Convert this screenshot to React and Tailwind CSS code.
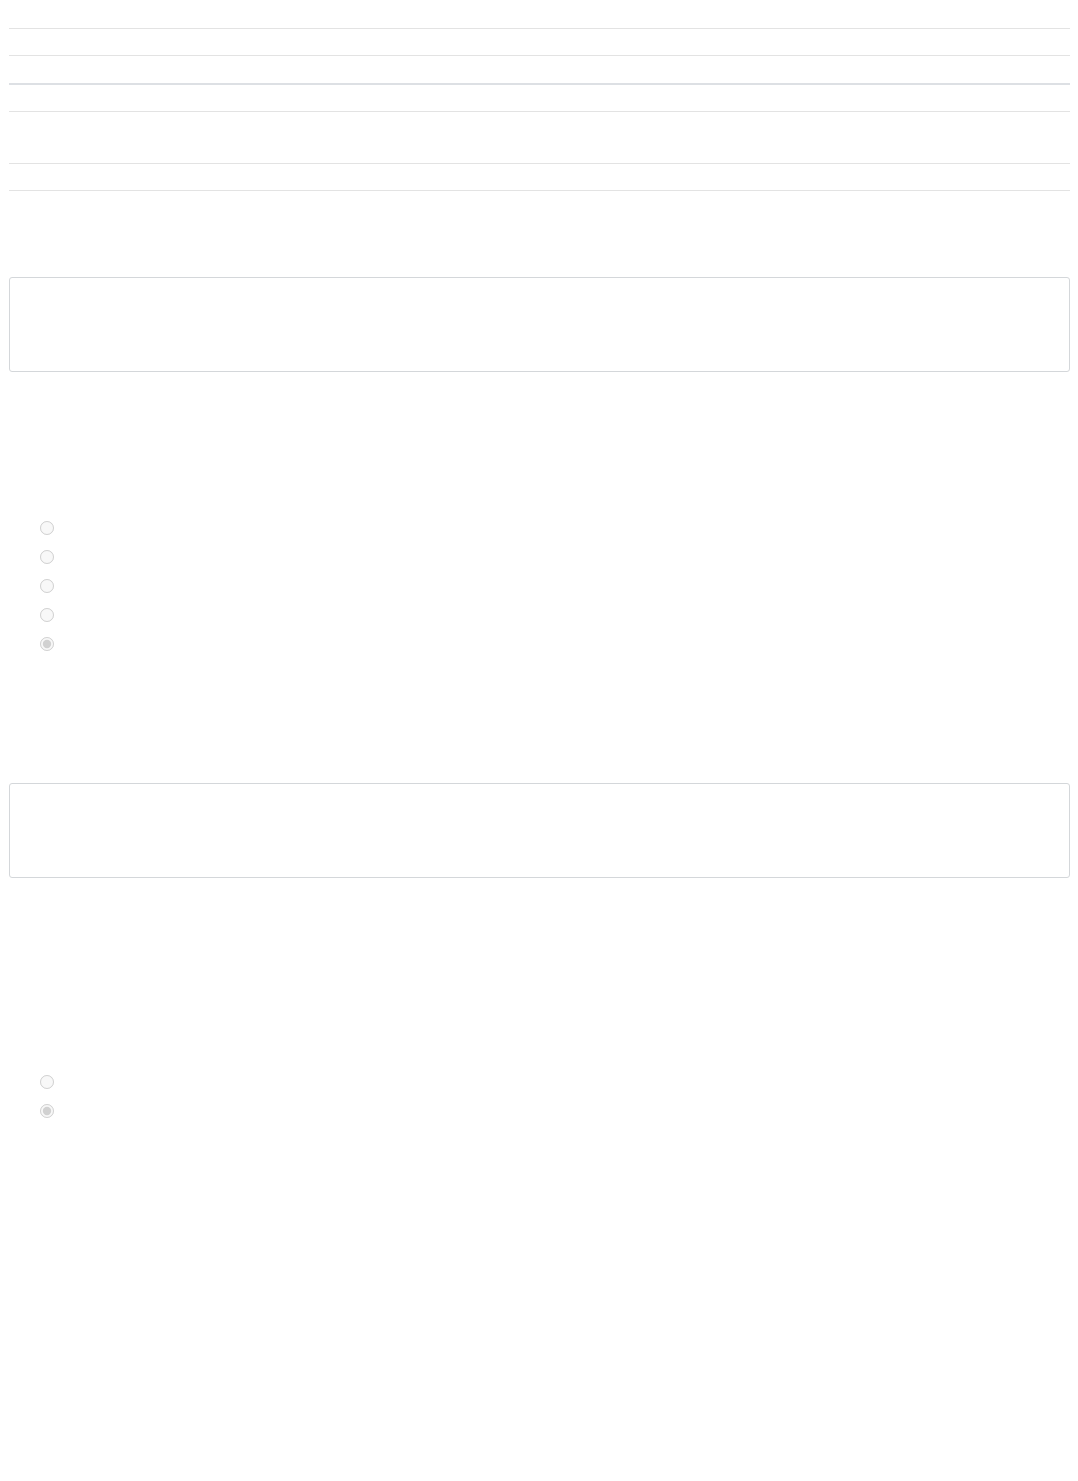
import React from "react";

function Radio({ checked }) {
  return (
    <div className="h-[29px] flex items-center">
      <input
        type="radio"
        disabled
        defaultChecked={checked}
        className="m-0 ml-[40px] w-[14px] h-[14px]"
        readOnly
      />
    </div>
  );
}

export default function App() {
  return (
    <div className="bg-white min-h-[1481px] pl-[9px] pr-[8px] font-['Liberation_Sans',sans-serif]">
      <div className="pt-[28px]">
        <div className="h-[27px] border-t border-[#e3e3e3]" />
        <div className="h-[28px] border-t border-[#e3e3e3]" />
        <div className="h-[28px] border-t-2 border-[#dde0e4]" />
        <div className="h-[52px] border-t border-[#e3e3e3]" />
        <div className="h-[27px] border-t border-[#e3e3e3]" />
        <div className="border-t border-[#e3e3e3]" />
      </div>
      <div className="mt-[86px] h-[95px] border border-[#d4d7da] rounded-[3px]" />
      <div className="mt-[141px] -ml-[9px]">
        <Radio />
        <Radio />
        <Radio />
        <Radio />
        <Radio checked />
      </div>
      <div className="mt-[125px] h-[95px] border border-[#d4d7da] rounded-[3px]" />
      <div className="mt-[189px] -ml-[9px]">
        <Radio />
        <Radio checked />
      </div>
    </div>
  );
}
